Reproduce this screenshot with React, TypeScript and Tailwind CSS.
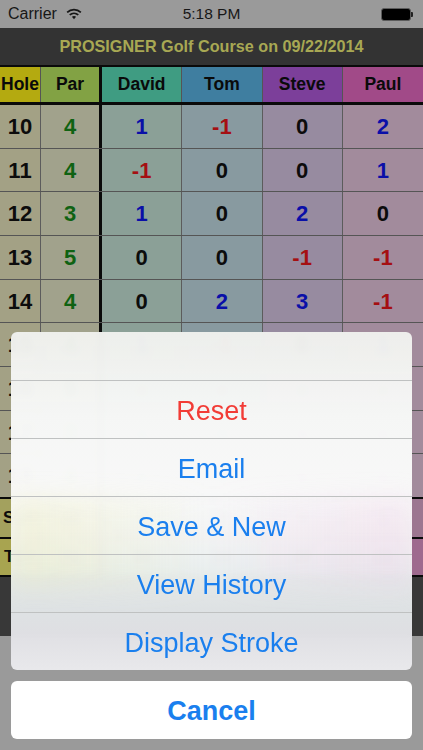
import React from "react";

const font = { fontFamily: '"Liberation Sans", Arial, sans-serif' };

const RED = "text-[#a50f12]";
const BLUE = "text-[#0a0fa8]";
const BLACK = "text-[#0c0c0c]";

function scoreColor(v: string) {
  if (v.startsWith("-") && v.length > 1) return RED;
  if (v === "0" || v === "-") return BLACK;
  return BLUE;
}

const rows: [string, string, string, string, string, string][] = [
  ["10", "4", "1", "-1", "0", "2"],
  ["11", "4", "-1", "0", "0", "1"],
  ["12", "3", "1", "0", "2", "0"],
  ["13", "5", "0", "0", "-1", "-1"],
  ["14", "4", "0", "2", "3", "-1"],
  ["15", "4", "1", "-1", "0", "1"],
  ["16", "5", "-", "-", "-", "-"],
  ["17", "3", "-", "-", "-", "-"],
  ["18", "4", "-", "-", "-", "-"],
];

const cols = "grid grid-cols-[41px_61px_repeat(4,1fr)]";

function Wifi() {
  return (
    <svg width="16" height="12" viewBox="0 0 18 14" className="ml-[9px]">
      <path d="M1 5.2C5.5 0.9 12.5 0.9 17 5.2" fill="none" stroke="#161616" strokeWidth="2" />
      <path d="M4 8.1C6.9 5.5 11.1 5.5 14 8.1" fill="none" stroke="#161616" strokeWidth="2" />
      <path d="M6.6 10.3L9 13.2L11.4 10.3C10 9 8 9 6.6 10.3Z" fill="#161616" />
    </svg>
  );
}

function Battery() {
  return (
    <div className="flex items-center">
      <div className="h-[13px] w-[30px] rounded-[3px] border border-[#5c5c5c] bg-black" />
      <div className="h-[5px] w-[2px] rounded-r-[1px] bg-[#222]" />
    </div>
  );
}

function SheetRow({ label, color = "text-[#1a7fee]" }: { label: string; color?: string }) {
  return (
    <div className={`flex h-[58px] items-center justify-center border-t border-[#bfc1c1] pt-[3px] text-[27px] leading-none ${color}`}>
      {label}
    </div>
  );
}

export default function App() {
  return (
    <div className="relative h-[750px] w-[423px] overflow-hidden bg-[#9a9a9a]" style={font}>
      <div className="relative flex h-[28px] items-center justify-between pl-[8px] pr-[10px] text-[16px] text-[#171717]">
        <div className="flex items-center">
          <span>Carrier</span>
          <Wifi />
        </div>
        <span className="absolute left-0 right-0 text-center text-[15.5px] font-medium">5:18 PM</span>
        <Battery />
      </div>

      <div className="flex h-[37px] items-center justify-center bg-[#333333] text-[16.2px] font-bold text-[#a8a853]">
        PROSIGNER Golf Course on 09/22/2014
      </div>

      <div className={`${cols} h-[40px] border-y-[2px] border-y-[#0a0a0a] border-b-[3px] text-[17.5px] font-bold text-[#0a0a0a]`}>
        <div className="flex items-center justify-center border-r border-[#555] bg-[#b4aa10]">Hole</div>
        <div className="flex items-center justify-center border-r-[3px] border-[#0a0a0a] bg-[#82a244]">Par</div>
        <div className="flex items-center justify-center border-r border-[#555] bg-[#3f9c82]">David</div>
        <div className="flex items-center justify-center border-r border-[#555] bg-[#3f7ea0]">Tom</div>
        <div className="flex items-center justify-center border-r border-[#555] bg-[#7c3f9a]">Steve</div>
        <div className="flex items-center justify-center bg-[#a14a88]">Paul</div>
      </div>

      <div className="flex h-[392px] flex-col">
        {rows.map((r, i) => (
          <div key={r[0]} className={`${cols} min-h-0 flex-1 border-b border-[#555] text-[22px] font-bold ${i === 8 ? "border-b-0" : ""}`}>
            <div className={`flex items-center justify-center border-r border-[#5c5c5c] bg-[#a3a185] ${BLACK}`}>{r[0]}</div>
            <div className="flex items-center justify-center border-r-[3px] border-[#0a0a0a] bg-[#a1a28c] text-[#0f6212]">{r[1]}</div>
            <div className={`flex items-center justify-center border-r border-[#5c5c5c] bg-[#8ba097] ${scoreColor(r[2])}`}>{r[2]}</div>
            <div className={`flex items-center justify-center border-r border-[#5c5c5c] bg-[#889aa0] ${scoreColor(r[3])}`}>{r[3]}</div>
            <div className={`flex items-center justify-center border-r border-[#5c5c5c] bg-[#978ba0] ${scoreColor(r[4])}`}>{r[4]}</div>
            <div className={`flex items-center justify-center bg-[#a28b9c] ${scoreColor(r[5])}`}>{r[5]}</div>
          </div>
        ))}
      </div>

      <div className={`${cols} h-[40px] border-t-[2px] border-[#0a0a0a] text-[17px] font-bold text-[#0c0c0c]`}>
        <div className="flex items-center pl-[3px] border-r border-[#555] bg-[#a3a15e]">SUB</div>
        <div className="flex items-center justify-center border-r-[3px] border-[#0a0a0a] bg-[#a0a36e]">36</div>
        <div className="flex items-center justify-center border-r border-[#555] bg-[#7aa08f]">2</div>
        <div className="flex items-center justify-center border-r border-[#555] bg-[#7a95a3]">3</div>
        <div className="flex items-center justify-center border-r border-[#555] bg-[#8f7a9f]">4</div>
        <div className="flex items-center justify-center bg-[#9c7690]">1</div>
      </div>
      <div className={`${cols} h-[40px] border-y-[2px] border-[#0a0a0a] text-[17px] font-bold text-[#0c0c0c]`}>
        <div className="flex items-center pl-[4px] border-r border-[#555] bg-[#a8a450]">TOT</div>
        <div className="flex items-center justify-center border-r-[3px] border-[#0a0a0a] bg-[#a0a85f]">72</div>
        <div className="flex items-center justify-center border-r border-[#555] bg-[#6fa78f]">24</div>
        <div className="flex items-center justify-center border-r border-[#555] bg-[#6f98ab]">24</div>
        <div className="flex items-center justify-center border-r border-[#555] bg-[#8f6fa7]">28</div>
        <div className="flex items-center justify-center bg-[#9e6a8e]">21</div>
      </div>

      <div className="h-[59px] bg-[#383838]" />

      {/* action sheet */}
      <div className="absolute inset-x-[11px] bottom-[11px] flex flex-col gap-[11px]">
        <div className="relative overflow-hidden rounded-[6px] bg-[linear-gradient(to_bottom,rgba(240,241,238,0.97)_0%,rgba(247,248,247,0.98)_25%,rgba(250,250,250,0.98)_48%,rgba(246,246,246,0.97)_62%,rgba(236,240,240,0.97)_72%,rgba(228,232,234,0.97)_82%,rgba(226,226,230,0.98)_90%,rgba(234,234,237,0.98)_100%)] backdrop-blur-[3px]">
          <div className="absolute inset-x-0 top-[165px] h-[90px] bg-gradient-to-r from-[#e6e89a]/25 via-[#ffffff]/0 to-[#e8b4e0]/20 blur-md" />
          <div className="relative">
            <div className="h-[48px]" />
            <SheetRow label="Reset" color="text-[#f23c36]" />
            <SheetRow label="Email" />
            <SheetRow label="Save & New" />
            <SheetRow label="View History" />
            <SheetRow label="Display Stroke" />
          </div>
        </div>
        <div className="flex h-[58px] items-center justify-center rounded-[6px] bg-white pt-[2px] text-[27px] font-bold leading-none text-[#1a7fee]">
          Cancel
        </div>
      </div>
    </div>
  );
}
